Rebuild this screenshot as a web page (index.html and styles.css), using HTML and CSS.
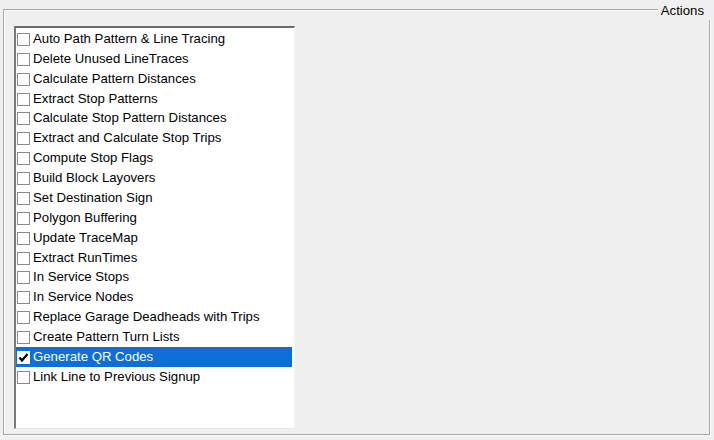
FILE: index.html
```html
<!DOCTYPE html>
<html>
<head>
<meta charset="utf-8">
<link rel="stylesheet" href="styles.css">
</head>
<body>
<div class="group">
  <div class="group-label">Actions</div>
  <div class="listbox">
    <div class="row"><span class="cb"></span><span class="txt">Auto Path Pattern &amp; Line Tracing</span></div>
    <div class="row"><span class="cb"></span><span class="txt">Delete Unused LineTraces</span></div>
    <div class="row"><span class="cb"></span><span class="txt">Calculate Pattern Distances</span></div>
    <div class="row"><span class="cb"></span><span class="txt">Extract Stop Patterns</span></div>
    <div class="row"><span class="cb"></span><span class="txt">Calculate Stop Pattern Distances</span></div>
    <div class="row"><span class="cb"></span><span class="txt">Extract and Calculate Stop Trips</span></div>
    <div class="row"><span class="cb"></span><span class="txt">Compute Stop Flags</span></div>
    <div class="row"><span class="cb"></span><span class="txt">Build Block Layovers</span></div>
    <div class="row"><span class="cb"></span><span class="txt">Set Destination Sign</span></div>
    <div class="row"><span class="cb"></span><span class="txt">Polygon Buffering</span></div>
    <div class="row"><span class="cb"></span><span class="txt">Update TraceMap</span></div>
    <div class="row"><span class="cb"></span><span class="txt">Extract RunTimes</span></div>
    <div class="row"><span class="cb"></span><span class="txt">In Service Stops</span></div>
    <div class="row"><span class="cb"></span><span class="txt">In Service Nodes</span></div>
    <div class="row"><span class="cb"></span><span class="txt">Replace Garage Deadheads with Trips</span></div>
    <div class="row"><span class="cb"></span><span class="txt">Create Pattern Turn Lists</span></div>
    <div class="row selected"><span class="cb checked"><svg width="11" height="11" viewBox="0 0 11 11"><polyline points="1.5,5.5 4,8.5 9.5,2" fill="none" stroke="#000" stroke-width="2.2"/></svg></span><span class="txt">Generate QR Codes</span></div>
    <div class="row"><span class="cb"></span><span class="txt">Link Line to Previous Signup</span></div>
  </div>
</div>
</body>
</html>
```

FILE: styles.css
```css
html, body {
  margin: 0;
  padding: 0;
}
body {
  width: 714px;
  height: 440px;
  background: #f0f0f0;
  font-family: "Liberation Sans", Arial, sans-serif;
  font-size: 13.2px;
  color: #000;
  overflow: hidden;
  box-sizing: border-box;
  padding: 9px 4px 0 3px;
}
.group {
  position: relative;
  height: 426px;
  border: 1px solid #a6a6a6;
  box-shadow: inset 1px 1px 0 #fff, 1px 1px 0 #fff;
  padding: 16px 0 0 10px;
  box-sizing: border-box;
}
.group-label {
  position: absolute;
  top: -8px;
  right: -4px;
  padding: 0 9px 0 3px;
  height: 18px;
  line-height: 18px;
  background: #f0f0f0;
}
.listbox {
  width: 281px;
  height: 403px;
  box-sizing: border-box;
  background: #fff;
  border-style: solid;
  border-width: 2px 1px 1px 2px;
  border-color: #6d6d6d #f4f4f4 #e6e6e6 #7a7a7a;
  padding: 1px 2px 0 0;
}
.row {
  display: flex;
  align-items: center;
  height: 19.875px;
  padding-left: 1px;
  white-space: nowrap;
}
.row.selected {
  background: #0c6fd8;
  color: #fff;
}
.cb {
  flex: none;
  width: 13px;
  height: 13px;
  box-sizing: border-box;
  border: 1px solid #8a8a8a;
  background: #fff;
  margin-right: 3px;
  margin-top: 1px;
  display: flex;
  align-items: center;
  justify-content: center;
}
.cb.checked {
  border-color: #fff;
}
.txt {
  line-height: 16px;
}
```
